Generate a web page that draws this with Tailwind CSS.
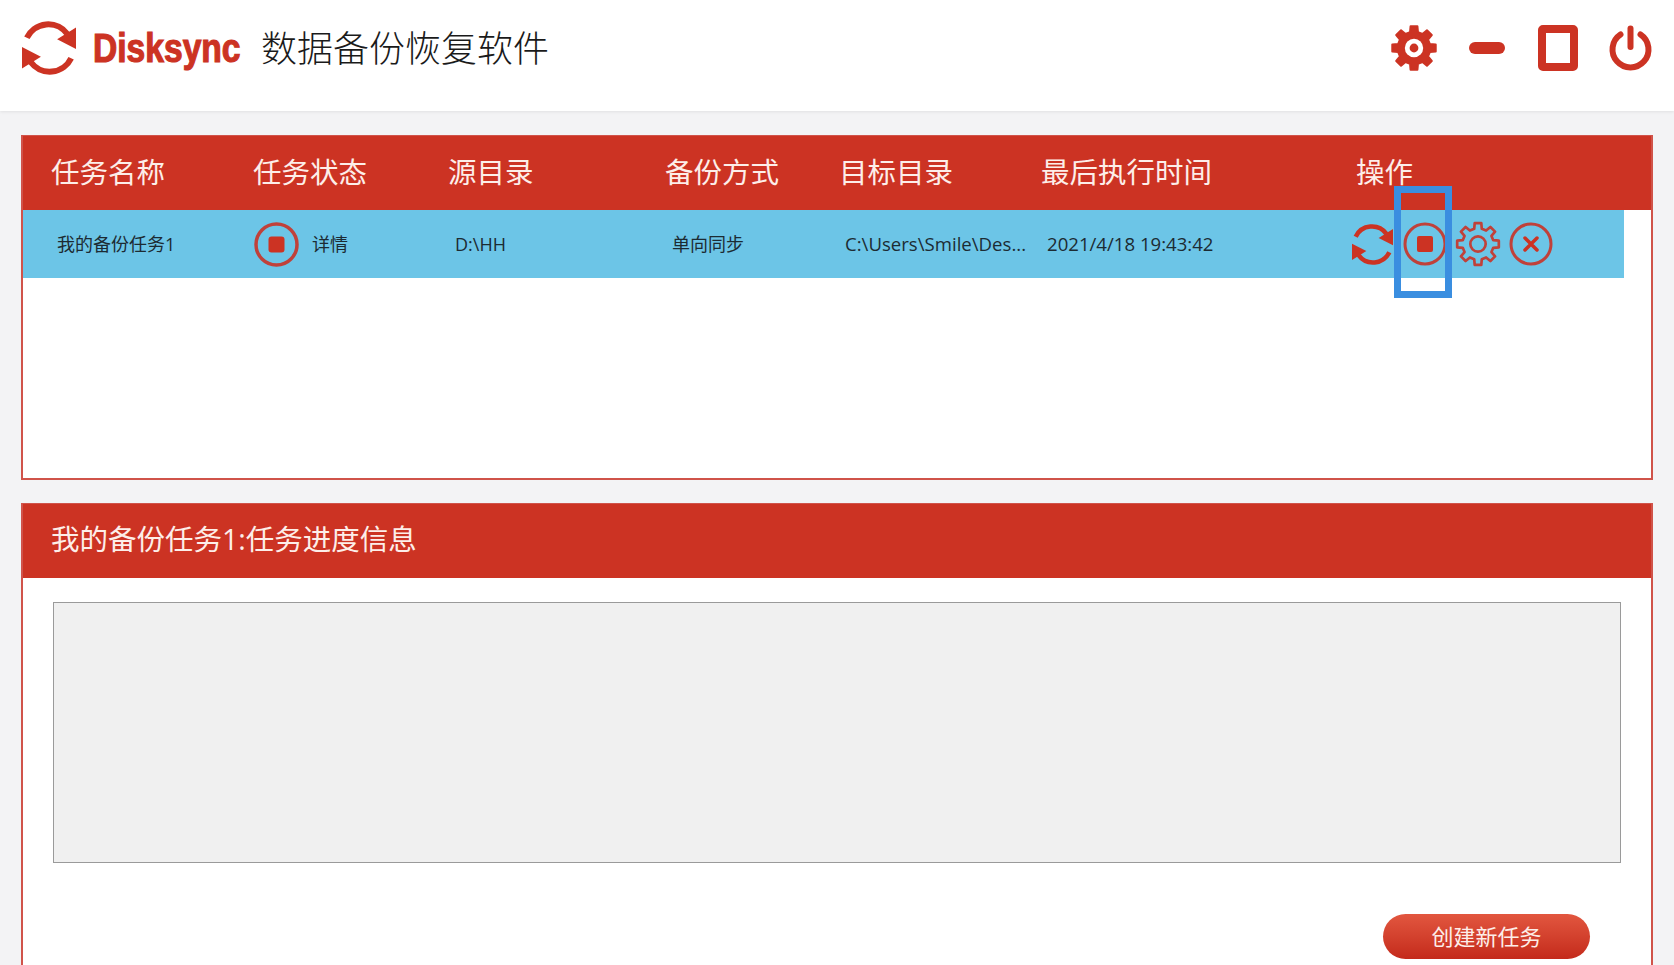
<!DOCTYPE html>
<html lang="zh-CN">
<head>
    <meta charset="UTF-8">
    <title>Disksync 数据备份恢复软件</title>
    <script src="https://cdn.jsdelivr.net/npm/@tailwindcss/browser@4"></script>
</head>
<body class="h-screen overflow-hidden bg-[#f3f3f5] font-['Open_Sans','Noto_Sans_CJK_SC',sans-serif] text-[#1c2b33]">
    <!-- Top bar -->
    <header class="h-[111px] bg-white flex items-center pl-[22px] pr-[21px] pb-[15px] shadow-[0_1px_3px_rgba(0,0,0,0.08)]">
        <svg class="w-[54px] h-[54px] mr-[17px]" viewBox="0 0 100 100">
            <g fill="#cc3323">
                <path d="M9 31A44 44 0 0 1 84 24" fill="none" stroke="#cc3323" stroke-width="11"/>
                <polygon points="100,12 100,52 65,34"/>
                <g transform="rotate(180 50 50)">
                    <path d="M9 31A44 44 0 0 1 84 24" fill="none" stroke="#cc3323" stroke-width="11"/>
                    <polygon points="100,12 100,52 65,34"/>
                </g>
            </g>
        </svg>
        <span class="inline-block w-[150px] text-[40px] leading-none font-bold text-[#cc3323] font-['Liberation_Sans'] origin-left scale-x-[0.84] whitespace-nowrap [-webkit-text-stroke:1.2px_#cc3323]">Disksync</span>
        <span class="ml-[18px] mt-[2px] text-[36px] leading-none font-light text-[#1a1a1a] whitespace-nowrap">数据备份恢复软件</span>
        <div class="ml-auto flex items-center">
            <svg class="w-[48px] h-[48px]" viewBox="-12 -12 24 24">
                <polygon fill="#cc3323" stroke="#cc3323" stroke-linejoin="round" points="-1.98,-7.95 -1.72,-10.86 1.72,-10.86 1.98,-7.95 4.22,-7.03 6.47,-8.9 8.9,-6.47 7.03,-4.22 7.95,-1.98 10.86,-1.72 10.86,1.72 7.95,1.98 7.03,4.22 8.9,6.47 6.47,8.9 4.22,7.03 1.98,7.95 1.72,10.86 -1.72,10.86 -1.98,7.95 -4.22,7.03 -6.47,8.9 -8.9,6.47 -7.03,4.22 -7.95,1.98 -10.86,1.72 -10.86,-1.72 -7.95,-1.98 -7.03,-4.22 -8.9,-6.47 -6.47,-8.9 -4.22,-7.03"/>
                <circle r="4.6" fill="#fff"/>
                <circle r="2.2" fill="#cc3323"/>
            </svg>
            <div class="ml-[31px] w-[36px] h-[12px] rounded-full bg-[#cc3323]"></div>
            <div class="ml-[33px] w-[40px] h-[46px] rounded-[5px] border-[8px] border-[#cc3323]"></div>
            <svg class="ml-[30px] w-[45px] h-[46px]" viewBox="0 0 45 46" fill="none" stroke="#cc3323" stroke-width="6" stroke-linecap="round">
                <path d="M12.5 9.5A18 18 0 1 0 32.5 9.5"/>
                <path d="M22.5 3.5V22"/>
            </svg>
        </div>
    </header>

    <main class="px-[21px] pt-[24px]">
        <!-- Task table -->
        <section class="h-[345px] bg-white border-2 border-[#d0534a]">
            <div class="h-[74px] -mt-px bg-[#cc3323] flex items-center pl-[28px] pb-[1px] text-[28.5px] text-[#fdeee9] whitespace-nowrap">
                <div class="w-[202px]">任务名称</div>
                <div class="w-[195px]">任务状态</div>
                <div class="w-[217px]">源目录</div>
                <div class="w-[174px]">备份方式</div>
                <div class="w-[202px]">目标目录</div>
                <div class="w-[315px]">最后执行时间</div>
                <div>操作</div>
            </div>
            <div class="w-[1601px] h-[68px] bg-[#6cc5e7] flex items-center pl-[28px] text-[18px] whitespace-nowrap">
                <div class="w-[202px] pl-[6px]">我的备份任务1</div>
                <div class="w-[195px] flex items-center pl-[1px]">
                    <svg class="w-[45px] h-[45px]" viewBox="0 0 45 45">
                        <circle cx="22.5" cy="22.5" r="20.5" fill="none" stroke="#c0413a" stroke-width="3.5"/>
                        <rect x="14.5" y="14.5" width="16" height="16" rx="3" fill="#cc3323"/>
                    </svg>
                    <span class="ml-[13px]">详情</span>
                </div>
                <div class="w-[217px] pl-[7px]">D:\HH</div>
                <div class="w-[174px] pl-[7px]">单向同步</div>
                <div class="w-[202px] pl-[6px] text-[18.6px]">C:\Users\Smile\Des...</div>
                <div class="w-[311px] pl-[6px] text-[18.6px]">2021/4/18 19:43:42</div>
                <div class="flex items-center">
                    <svg class="w-[41px] h-[41px]" viewBox="0 0 100 100">
                        <path d="M9 31A44 44 0 0 1 84 24" fill="none" stroke="#cc3323" stroke-width="11"/>
                        <polygon fill="#cc3323" points="100,12 100,52 65,34"/>
                        <g transform="rotate(180 50 50)">
                            <path d="M9 31A44 44 0 0 1 84 24" fill="none" stroke="#cc3323" stroke-width="11"/>
                            <polygon fill="#cc3323" points="100,12 100,52 65,34"/>
                        </g>
                    </svg>
                    <svg class="ml-[10px] w-[44px] h-[44px]" viewBox="0 0 44 44">
                        <circle cx="22" cy="22" r="20" fill="none" stroke="#c0413a" stroke-width="3"/>
                        <rect x="14" y="14" width="16" height="16" rx="2" fill="#cc3323"/>
                    </svg>
                    <svg class="ml-[8px] w-[46px] h-[46px]" viewBox="-12 -12 24 24" fill="none" stroke="#c0413a" stroke-width="1.4">
                        <polygon stroke-linejoin="round" points="-1.98,-7.95 -1.72,-10.86 1.72,-10.86 1.98,-7.95 4.22,-7.03 6.47,-8.9 8.9,-6.47 7.03,-4.22 7.95,-1.98 10.86,-1.72 10.86,1.72 7.95,1.98 7.03,4.22 8.9,6.47 6.47,8.9 4.22,7.03 1.98,7.95 1.72,10.86 -1.72,10.86 -1.98,7.95 -4.22,7.03 -6.47,8.9 -8.9,6.47 -7.03,4.22 -7.95,1.98 -10.86,1.72 -10.86,-1.72 -7.95,-1.98 -7.03,-4.22 -8.9,-6.47 -6.47,-8.9 -4.22,-7.03"/>
                        <circle r="4"/>
                    </svg>
                    <svg class="ml-[8px] w-[44px] h-[44px]" viewBox="0 0 44 44" fill="none" stroke="#c0413a" stroke-width="3">
                        <circle cx="22" cy="22" r="20"/>
                        <path d="M16 16L28 28M28 16L16 28" stroke="#cc3323" stroke-width="3.5" stroke-linecap="round"/>
                    </svg>
                </div>
            </div>
        </section>

        <!-- Progress panel -->
        <section class="mt-[23px] h-[600px] bg-white border-2 border-[#d0534a]">
            <div class="h-[74px] -mt-px bg-[#cc3323] flex items-center pl-[28px] pb-[3px] text-[28.5px] text-[#fdeee9] whitespace-nowrap">我的备份任务1:任务进度信息</div>
            <div class="mt-[24px] mx-[30px] h-[261px] bg-[#f0f0f0] border border-[#9a9a9a]"></div>
            <div class="mt-[51px] flex justify-end pr-[61px]">
                <button class="w-[207px] h-[45px] rounded-full bg-gradient-to-b from-[#e2563f] to-[#c4291a] text-[22px] text-[#fdeee9]">创建新任务</button>
            </div>
        </section>
    </main>

    <!-- Annotation box over the stop button -->
    <div class="absolute left-[1394px] top-[186px] w-[58px] h-[112px] border-[7px] border-[#3a8ee0]"></div>
</body>
</html>
